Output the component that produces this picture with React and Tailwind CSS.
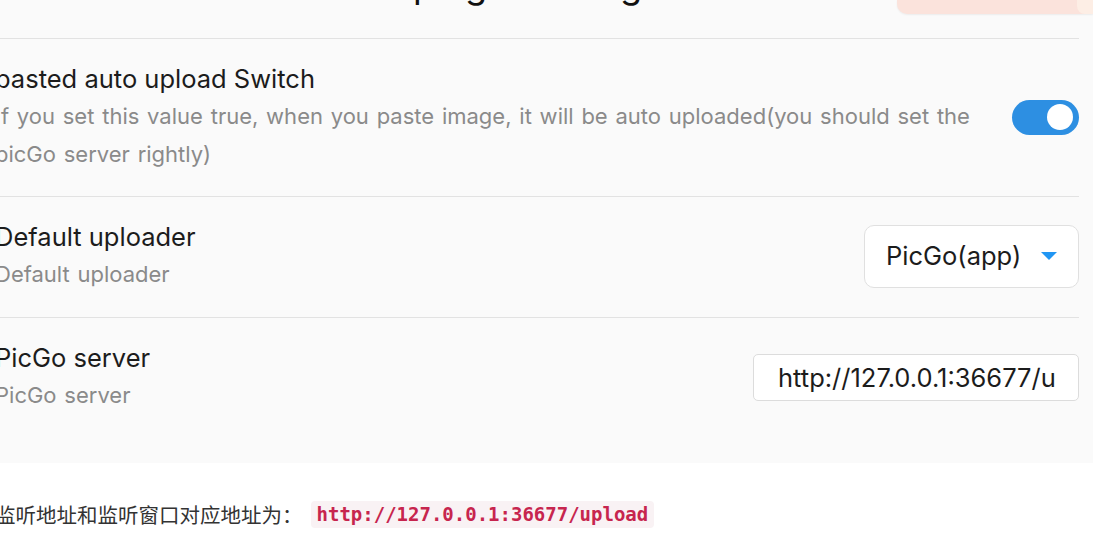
import React from "react";

const SANS = "font-['Inter','Noto_Sans',sans-serif]";

function SettingRow({ title, desc, children, last, pb = "pb-[23px]" }) {
  return (
    <div
      className={`flex items-center gap-[30px] pt-[22px] ${pb} ${
        last ? "" : "border-b border-[#e2e2e2]"
      }`}
    >
      <div className="flex-1 min-w-0">
        <div className="text-[25.5px] leading-[36px] text-[#1c1c1c]">{title}</div>
        <div className="text-[22px] leading-[38px] text-[#8a8a8a] [word-spacing:1.6px]">{desc}</div>
      </div>
      <div className="shrink-0">{children}</div>
    </div>
  );
}

export default function App() {
  return (
    <div className={`relative w-full h-[545px] overflow-hidden bg-white ${SANS}`}>
      {/* toast peeking in at the top right */}
      <div className="absolute top-0 left-[897px] right-0 h-[14px] flex rounded-bl-[10px] bg-[#fbe3dc] shadow-[0_1px_2px_rgba(0,0,0,0.06)]">
        <div className="flex-1" />
        <div className="w-[16px] h-full rounded-bl-[8px] bg-[#fdeee5]" />
      </div>

      <div className="ml-[-5px] pr-[14px] pb-[26px] bg-[#fafafa]">
        <div className="h-[39px] flex justify-center items-start border-b border-[#e2e2e2]">
          <div className="mt-[-33px] text-[36px] leading-[36px] text-[#111]">plugin settings</div>
        </div>

        <SettingRow
          title="pasted auto upload Switch"
          desc="If you set this value true, when you paste image, it will be auto uploaded(you should set the picGo server rightly)"
        >
          <div className="w-[67px] h-[35px] rounded-full bg-[#2d8fe2] flex items-center justify-end pr-[6px]">
            <div className="w-[26px] h-[26px] rounded-full bg-white" />
          </div>
        </SettingRow>

        <SettingRow title="Default uploader" desc="Default uploader" pb="pb-[24px]">
          <div className="w-[215px] h-[63px] rounded-[10px] border border-[#e0e0e0] bg-white flex items-center justify-between pl-[21px] pr-[21px]">
            <span className="text-[25.5px] text-[#1c1c1c]">PicGo(app)</span>
            <svg width="16" height="8" viewBox="0 0 16 8">
              <path d="M0 0 L16 0 L8 8 Z" fill="#2196f3" />
            </svg>
          </div>
        </SettingRow>

        <SettingRow title="PicGo server" desc="PicGo server" last>
          <input
            readOnly
            defaultValue="http://127.0.0.1:36677/upload"
            className="w-[326px] h-[47px] rounded-[5px] border border-[#dcdcdc] bg-white pl-[24px] pr-[22px] text-[25.5px] text-[#1c1c1c] outline-none"
          />
        </SettingRow>
      </div>

      <div className="flex items-center mt-[37px] ml-[-5px]">
        <span className="text-[20.5px] leading-[28px] text-[#333] font-['Noto_Sans_CJK_SC',sans-serif]">
          监听地址和监听窗口对应地址为：
        </span>
        <code className="ml-[8px] px-[6px] h-[27px] flex items-center rounded-[4px] bg-[#f9f2f4] text-[#c7254e] text-[19px] font-bold font-['DejaVu_Sans_Mono',monospace]">
          http://127.0.0.1:36677/upload
        </code>
      </div>
    </div>
  );
}
